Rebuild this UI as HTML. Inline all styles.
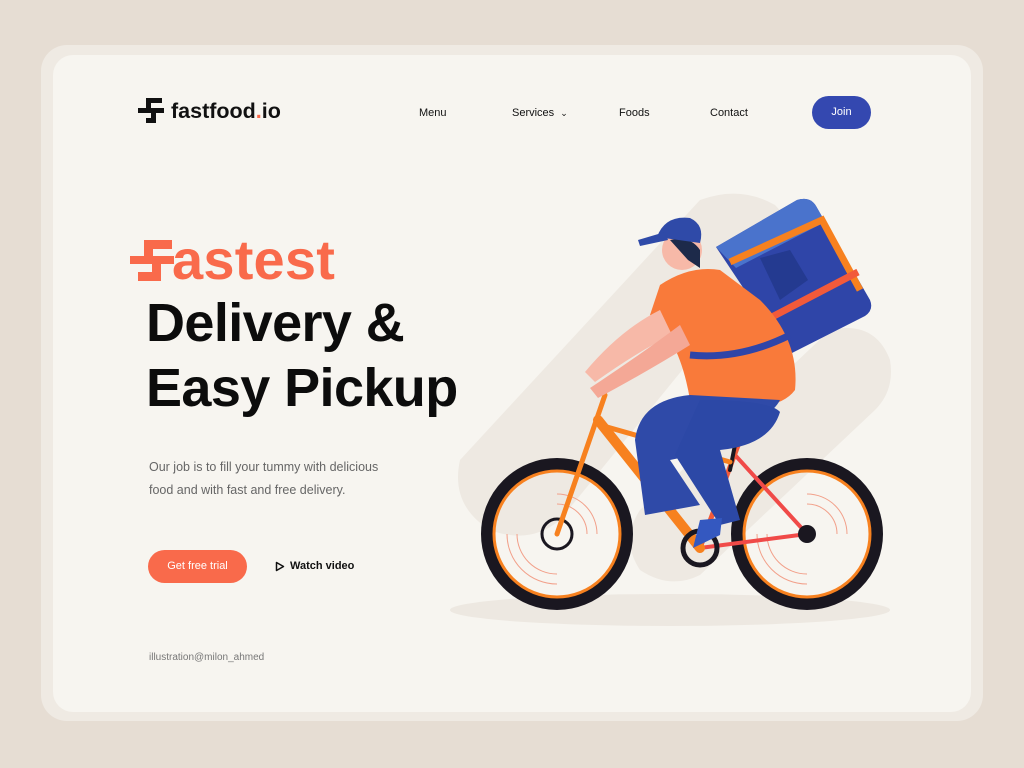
<!DOCTYPE html>
<html><head><style>
*{margin:0;padding:0;box-sizing:border-box}
body{width:1024px;height:768px;background:#E6DDD3;position:relative;overflow:hidden;font-family:"Liberation Sans",sans-serif}
.back{position:absolute;left:41px;top:45px;width:942px;height:676px;border-radius:26px;background:#EFEAE3}
.card{position:absolute;left:53px;top:55px;width:918px;height:657px;border-radius:20px;background:#F7F5F0}
.abs{position:absolute}
.nav{font-size:11px;color:#111;top:107px}
h1{position:absolute;left:146px;font-size:54px;font-weight:bold;letter-spacing:-0.6px;color:#0c0c0c;line-height:1}
</style></head><body>
<div class="back"></div>
<div class="card"></div>
<!-- logo -->
<svg class="abs" style="left:138px;top:98px" width="26" height="26" viewBox="0 0 26 26">
<rect x="8" y="0" width="16" height="5" fill="#111"/><rect x="8" y="0" width="5" height="12" fill="#111"/>
<rect x="0" y="10" width="26" height="5" fill="#111"/><rect x="13" y="13" width="5" height="12" fill="#111"/><rect x="8" y="20" width="10" height="5" fill="#111"/>
</svg>
<div class="abs" style="left:171px;top:99px;font-size:21.5px;font-weight:bold;color:#111">fastfood<span style="color:#F96A4B">.</span>io</div>
<div class="abs nav" style="left:419px">Menu</div>
<div class="abs nav" style="left:512px">Services &nbsp;<span style="font-size:9px">&#8964;</span></div>
<div class="abs nav" style="left:619px">Foods</div>
<div class="abs nav" style="left:710px">Contact</div>
<div class="abs" style="left:812px;top:96px;width:59px;height:33px;border-radius:17px;background:#3448B0;color:#fff;font-size:11px;text-align:center;line-height:33px">Join</div>
<!-- Fastest -->
<svg class="abs" style="left:130px;top:240px" width="44" height="42" viewBox="0 0 44 42">
<rect x="14" y="0" width="28" height="9" fill="#F96A4B"/><rect x="14" y="0" width="9" height="22" fill="#F96A4B"/>
<rect x="0" y="16" width="44" height="8" fill="#F96A4B"/><rect x="22" y="20" width="9" height="21" fill="#F96A4B"/><rect x="8" y="32" width="23" height="9" fill="#F96A4B"/>
</svg>
<div class="abs" style="left:172px;top:232px;font-size:56px;font-weight:bold;color:#F96A4B;letter-spacing:0.2px;line-height:1">astest</div>
<h1 style="top:296px">Delivery &amp;</h1>
<h1 style="top:361px">Easy Pickup</h1>
<div class="abs" style="left:149px;top:456px;font-size:12.5px;color:#666;line-height:23px">Our job is to fill your tummy with delicious<br>food and with fast and free delivery.</div>
<div class="abs" style="left:148px;top:550px;width:99px;height:33px;border-radius:17px;background:#F96A4B;color:#fff;font-size:11px;text-align:center;line-height:33px">Get free trial</div>
<svg class="abs" style="left:275px;top:561px" width="10" height="11" viewBox="0 0 10 11"><path d="M1.5 1.5 L8.5 5.5 L1.5 9.5 Z" fill="none" stroke="#111" stroke-width="1.5" stroke-linejoin="round"/></svg>
<div class="abs" style="left:290px;top:560px;font-size:11px;color:#111;font-weight:bold">Watch video</div>
<div class="abs" style="left:149px;top:652px;font-size:10px;color:#777">illustration@milon_ahmed</div>
<!-- illustration -->
<svg class="abs" style="left:0;top:0" width="1024" height="768" viewBox="0 0 1024 768">
<g fill="#EEE9E2">
<path d="M700 200 Q740 185 775 205 Q795 225 780 250 L560 520 Q530 545 490 530 Q450 505 460 460 Z"/>
<path d="M830 330 Q875 320 890 360 Q895 390 875 410 L700 575 Q670 590 640 570 Q620 540 640 510 Z"/>
</g>
<ellipse cx="670" cy="610" rx="220" ry="16" fill="#EDE8E1"/>
<!-- wheels -->
<g fill="none">
<circle cx="557" cy="534" r="70" stroke="#1a1720" stroke-width="12"/>
<circle cx="557" cy="534" r="63" stroke="#F7811F" stroke-width="3"/>
<circle cx="807" cy="534" r="70" stroke="#1a1720" stroke-width="12"/>
<circle cx="807" cy="534" r="63" stroke="#F7811F" stroke-width="3"/>
<circle cx="557" cy="534" r="15" stroke="#1a1720" stroke-width="3"/>
<g stroke="#F2A08A" stroke-width="1">
<path d="M557 504 A30 30 0 0 1 587 534"/><path d="M557 494 A40 40 0 0 1 597 534"/><path d="M517 534 A40 40 0 0 0 557 574"/><path d="M507 534 A50 50 0 0 0 557 584"/>
<path d="M807 504 A30 30 0 0 1 837 534"/><path d="M807 494 A40 40 0 0 1 847 534"/><path d="M767 534 A40 40 0 0 0 807 574"/><path d="M757 534 A50 50 0 0 0 807 584"/>
</g>
</g>
<!-- frame -->
<g stroke-linecap="round" fill="none">
<path d="M700 548 L807 534" stroke="#1a1720" stroke-width="2"/>
<path d="M700 548 L807 534" stroke="#F04A48" stroke-width="4"/>
<path d="M735 455 L807 534" stroke="#F04A48" stroke-width="4"/>
<path d="M740 440 L700 548" stroke="#F25A3A" stroke-width="5"/>
<path d="M735 445 L730 470" stroke="#1a1720" stroke-width="4"/>
<path d="M598 420 L700 548" stroke="#F7811F" stroke-width="10"/>
<path d="M600 425 L730 462" stroke="#F7811F" stroke-width="5"/>
<path d="M605 395 L557 534" stroke="#F7811F" stroke-width="5"/>
</g>
<circle cx="700" cy="548" r="17" fill="none" stroke="#1a1720" stroke-width="5"/>
<circle cx="807" cy="534" r="9" fill="#1a1720"/>
<!-- box -->
<path d="M716 247 L797 200 Q810 196 816 206 L870 300 Q874 310 865 316 L788 355 Z" fill="#2F45A8"/>
<path d="M716 247 L797 200 Q810 196 816 206 L825 222 L736 268 Z" fill="#4A73CC"/>
<path d="M760 258 L790 250 L808 280 L780 300 Z" fill="#243A90"/>
<path d="M730 262 L822 220 L860 290" stroke="#F7811F" stroke-width="7" fill="none"/>
<path d="M770 318 L858 272" stroke="#F25A3A" stroke-width="7"/>
<!-- torso -->
<path d="M660 285 Q690 265 720 270 L760 300 Q800 340 795 390 Q780 410 740 405 L690 400 Q680 340 650 315 Z" fill="#F97A3A"/>
<path d="M690 355 Q740 360 790 335" stroke="#2F45A8" stroke-width="7" fill="none"/>
<!-- arms -->
<path d="M660 310 Q620 330 585 372 L595 382 Q640 350 672 335 Z" fill="#F7B9A8"/>
<path d="M680 325 Q640 355 590 388 L598 398 Q650 370 690 345 Z" fill="#F4A896"/>
<!-- legs -->
<path d="M690 395 Q640 400 635 440 L645 515 L700 505 L670 460 Q700 455 725 430 Q770 420 780 400 Z" fill="#2F4AA8"/>
<path d="M700 400 Q770 400 780 412 Q770 445 720 450 L740 520 L720 525 L675 455 Z" fill="#2C48A6"/>
<path d="M700 520 L722 518 L720 535 L693 548 Z" fill="#3458C0"/>
<!-- head -->
<circle cx="682" cy="250" r="20" fill="#F7B9A8"/>
<path d="M670 240 Q690 235 700 250 L700 268 L688 260 Z" fill="#1d2a4a"/>
<path d="M657 237 Q665 215 690 218 Q705 225 700 243 Z" fill="#2F4AA8"/>
<path d="M638 240 L665 232 L668 240 L640 246 Z" fill="#2F4AA8"/>
</svg>
</body></html>
